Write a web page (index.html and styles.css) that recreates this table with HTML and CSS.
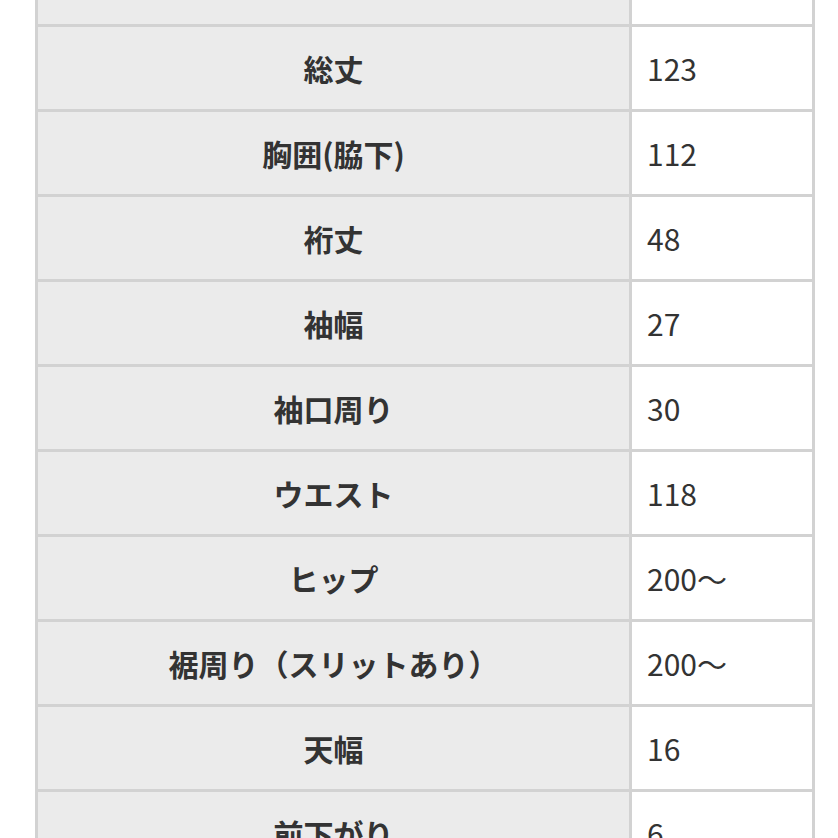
FILE: index.html
```html
<!DOCTYPE html>
<html lang="ja">
<head>
<meta charset="utf-8">
<link rel="stylesheet" href="styles.css">
</head>
<body>
<div class="sheet">
  <div class="label"></div><div class="value"></div>
  <div class="label">総丈</div><div class="value">123</div>
  <div class="label">胸囲(脇下)</div><div class="value">112</div>
  <div class="label">裄丈</div><div class="value">48</div>
  <div class="label">袖幅</div><div class="value">27</div>
  <div class="label">袖口周り</div><div class="value">30</div>
  <div class="label">ウエスト</div><div class="value">118</div>
  <div class="label">ヒップ</div><div class="value">200〜</div>
  <div class="label">裾周り（スリットあり）</div><div class="value">200〜</div>
  <div class="label">天幅</div><div class="value">16</div>
  <div class="label">前下がり</div><div class="value">6</div>
</div>
</body>
</html>
```
FILE: styles.css
```css
html, body {
  margin: 0;
  padding: 0;
  background: #ffffff;
  overflow: hidden;
}
body {
  width: 838px;
  height: 838px;
  font-family: "Noto Sans CJK JP", "Noto Sans", sans-serif;
  color: #333333;
}
.sheet {
  display: grid;
  grid-template-columns: 591px 180px;
  grid-auto-rows: 82px;
  gap: 3px;
  padding: 3px;
  width: 774px;
  margin: -61px 0 0 35px;
  background: #d2d2d2;
}
.label {
  background: #ebebeb;
  display: flex;
  align-items: center;
  justify-content: center;
  font-size: 30px;
  font-weight: 700;
}
.value {
  background: #ffffff;
  display: flex;
  align-items: center;
  padding-left: 15px;
  font-size: 30px;
  font-weight: 400;
}
```
